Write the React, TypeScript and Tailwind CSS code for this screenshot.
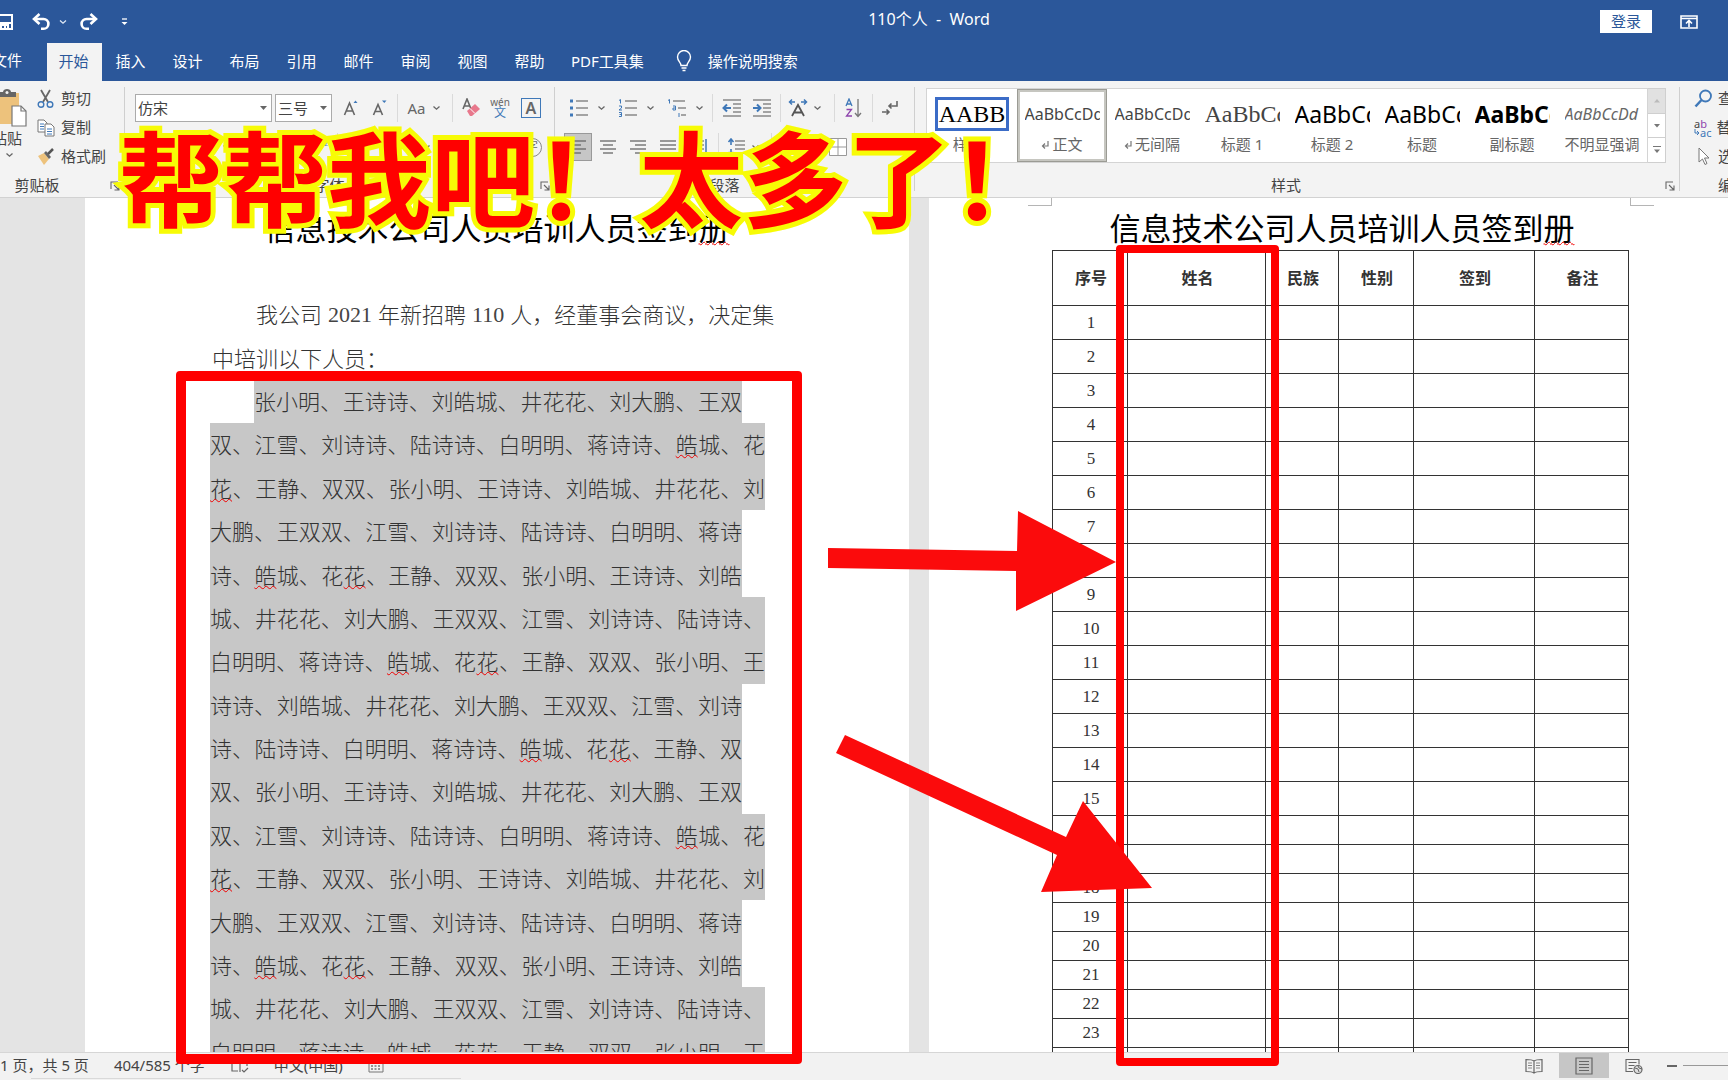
import React from "react";

type Kids = { children?: React.ReactNode };

/* ---------- small drawing helpers ---------- */

function Svg({ w, h, children }: { w: number; h: number } & Kids) {
  return (
    <svg width={w} height={h} viewBox={`0 0 ${w} ${h}`} fill="none" aria-hidden="true" className="shrink-0">
      {children}
    </svg>
  );
}

const Chevron = () => (
  <Svg w={9} h={6}>
    <path d="M1.5 1.5 4.5 4.2 7.5 1.5" stroke="#666" strokeWidth="1.3" />
  </Svg>
);

const Lines = ({ xs, color = "#777" }: { xs: number[][]; color?: string }) => (
  <>
    {xs.map(([x1, x2, y], i) => (
      <path key={i} d={`M${x1} ${y}H${x2}`} stroke={color} strokeWidth="1.3" />
    ))}
  </>
);

const Launcher = () => (
  <button type="button" aria-label="对话框" className="absolute right-1 bottom-[6px]">
    <Svg w={10} h={10}>
      <path d="M1 8V1h7M4 4l4.5 4.5M9 4.5V9H4.5" stroke="#666" strokeWidth="1.1" />
    </Svg>
  </button>
);

function Group({ label, className, launcher, children }: { label: string; className: string; launcher?: boolean } & Kids) {
  return (
    <section aria-label={label} className={`relative flex shrink-0 flex-col ${className}`}>
      <div className="h-[92px]">{children}</div>
      <div className="text-center text-[15px] leading-6 text-[#444]">{label}</div>
      {launcher && <Launcher />}
    </section>
  );
}

const GroupRule = () => <div className="my-[6px] w-px shrink-0 bg-[#cfcfcf]" />;
const Rule = ({ className }: { className: string }) => <div className={`h-7 w-px shrink-0 bg-[#dadada] ${className}`} />;

function Tool({ label, className = "w-7", children }: { label: string; className?: string } & Kids) {
  return (
    <button type="button" aria-label={label} className={`flex h-7 shrink-0 items-center justify-center ${className}`}>
      {children}
    </button>
  );
}

/* ---------- title bar and tabs ---------- */

function TitleBar() {
  return (
    <header className="relative flex h-[43px] items-center justify-center text-[15px] text-white">
      <div className="absolute left-0 flex h-10 items-center">
        <button type="button" aria-label="保存" className="-ml-1">
          <Svg w={18} h={18}>
            <path d="M1 2h15v14H1z" stroke="#fff" strokeWidth="2" />
            <path d="M1 10h15M5 16v-4h7v4M9 13v3" stroke="#fff" strokeWidth="2" />
          </Svg>
        </button>
        <button type="button" aria-label="撤消" className="ml-[18px]">
          <Svg w={20} h={18}>
            <path d="M3 6h8.5a4.7 4.7 0 0 1 0 9.8H9" stroke="#fff" strokeWidth="2.6" />
            <path d="M7.5 1 2 6l5.5 5" stroke="#fff" strokeWidth="2.6" />
          </Svg>
        </button>
        <Svg w={22} h={6}>
          <path d="M8 1.5 11 4.2 14 1.5" stroke="#dfe8f5" strokeWidth="1.3" />
        </Svg>
        <button type="button" aria-label="恢复" className="ml-1">
          <Svg w={20} h={18}>
            <path d="M17 6H8.5a4.7 4.7 0 0 0 0 9.8H11" stroke="#fff" strokeWidth="2.6" />
            <path d="M12.5 1 18 6l-5.5 5" stroke="#fff" strokeWidth="2.6" />
          </Svg>
        </button>
        <button type="button" aria-label="自定义" className="ml-[22px]">
          <Svg w={10} h={10}>
            <path d="M2 2h5" stroke="#fff" strokeWidth="1.3" />
            <path d="M1.5 5h6L4.5 8z" fill="#fff" />
          </Svg>
        </button>
      </div>
      <h1 className="ml-[130px] pb-[6px] text-[16px] whitespace-pre">110个人  -  Word</h1>
      <div className="absolute right-[30px] flex h-[39px] items-center gap-7">
        <button type="button" className="h-[23px] w-[52px] bg-white text-[15px] leading-[23px] text-[#2b579a]">
          登录
        </button>
        <button type="button" aria-label="功能区显示选项">
          <Svg w={18} h={14}>
            <path d="M1 1h16v12H1zM1 3.500h16" stroke="#fff" strokeWidth="1.600" />
            <path d="M9 12V6M6 8.500 9 5.500l3 3" stroke="#fff" strokeWidth="1.600" />
          </Svg>
        </button>
      </div>
    </header>
  );
}

const TABS = ["开始", "插入", "设计", "布局", "引用", "邮件", "审阅", "视图", "帮助"];

function Tabs() {
  return (
    <nav className="flex h-[38px] items-stretch text-[15px] whitespace-nowrap text-white">
      <button type="button" className="-ml-2 mr-[25px] pb-1">文件</button>
      <div className="flex gap-[2px]">
        {TABS.map((t, i) => (
          <button
            type="button"
            key={t}
            className={i === 0 ? "w-[55px] bg-[#f3f3f3] pr-[2px] pb-[2px] text-[#2b579a]" : "w-[55px] pr-[2px] pb-[2px]"}
          >
            {t}
          </button>
        ))}
      </div>
      <button type="button" className="ml-[13px] pb-[2px]">PDF工具集</button>
      <button type="button" className="ml-8 flex items-center gap-4 pb-[2px]">
        <Svg w={16} h={22}>
          <path d="M5 15.500C5 12.500 1.500 11 1.500 7a6.500 6.500 0 0 1 13 0c0 4-3.500 5.500-3.500 8.500zM5.500 18h5M6.500 20.500h3" stroke="#fff" strokeWidth="1.400" />
        </Svg>
        操作说明搜索
      </button>
    </nav>
  );
}

/* ---------- ribbon ---------- */

function Clipboard() {
  return (
    <Group label="剪贴板" className="w-[124px] *:nth-[2]:pr-[50px]" launcher>
      <div className="flex pt-[3px]">
        <button type="button" className="-ml-2 flex w-[38px] flex-col items-center pt-1 text-[15px] leading-5 text-[#444]">
          <Svg w={38} h={40}>
            <path d="M0 5h27v31H0z" fill="#edc27c" />
            <path d="M6 9V4h5c0-4 8-4 8 0h5v5z" fill="#666" />
            <circle cx="15" cy="4.500" r="1.500" fill="#f3f3f3" />
            <path d="M20 18h9l5 5v15H20z" fill="#fff" stroke="#777" strokeWidth="1.200" />
            <path d="M29 18v5h5" stroke="#777" strokeWidth="1.200" />
          </Svg>
          <span className="pr-2 whitespace-nowrap">粘贴</span>
          <span className="mt-1 pr-1"><Chevron /></span>
        </button>
        <div className="ml-[7px] flex flex-col text-[15px] leading-[29px] whitespace-nowrap text-[#444]">
          <button type="button" className="flex items-center gap-[6px]">
            <Svg w={18} h={20}>
              <path d="M4 1l7 12M13 1 6 13" stroke="#666" strokeWidth="1.800" />
              <circle cx="4" cy="15.500" r="2.800" stroke="#3f78b8" strokeWidth="1.400" />
              <circle cx="13" cy="15.500" r="2.800" stroke="#3f78b8" strokeWidth="1.400" />
            </Svg>
            剪切
          </button>
          <button type="button" className="flex items-center gap-[6px]">
            <Svg w={18} h={20}>
              <path d="M1 2h6l3 3v9H1z" fill="#fff" stroke="#777" />
              <path d="M3 6h4M3 8.500h4M3 11h4" stroke="#3f78b8" />
              <path d="M8 6h6l3 3v9H8z" fill="#fff" stroke="#777" />
              <path d="M10 11h5M10 13.500h5M10 16h5" stroke="#3f78b8" />
            </Svg>
            复制
          </button>
          <button type="button" className="flex items-center gap-[6px]">
            <Svg w={18} h={20}>
              <path d="M1 9l6-3 5 6-5 6z" fill="#edc27c" />
              <path d="M7 6l2-2 5 6-2 2z" fill="#666" />
              <path d="M11 7l5-5" stroke="#555" strokeWidth="2.500" />
            </Svg>
            格式刷
          </button>
        </div>
      </div>
    </Group>
  );
}

function Combo({ label, value, className }: { label: string; value: string; className: string }) {
  return (
    <div className={`relative h-7 shrink-0 ${className}`}>
      <select aria-label={label} defaultValue={value} className="h-7 w-full appearance-none border border-[#ababab] bg-white pl-[2px] text-[15px] text-[#444]">
        <option>{value}</option>
      </select>
      <span className="pointer-events-none absolute top-3 right-[5px]">
        <Svg w={7} h={4}>
          <path d="M0 0h7L3.500 4z" fill="#666" />
        </Svg>
      </span>
    </div>
  );
}

function FontGroup() {
  return (
    <Group label="字体" className="w-[429px] *:nth-[2]:pr-5" launcher>
      <div className="flex items-center pt-[13px] pl-[10px] font-['Noto_Sans'] text-[#666]">
        <Combo label="字体" value="仿宋" className="w-[137px] font-['Noto_Sans_CJK_SC']" />
        <Combo label="字号" value="三号" className="ml-[3px] w-[57px] font-['Noto_Sans_CJK_SC']" />
        <Tool label="增大字号" className="ml-[5px] w-7">
          <Svg w={16} h={18}>
            <path d="M1.500 16 6.500 4l5 12M3.200 12h6.600" stroke="#666" strokeWidth="1.600" />
            <path d="M10.500 4l2-2.500 2 2.500z" fill="#3f78b8" />
          </Svg>
        </Tool>
        <Tool label="减小字号" className="ml-px w-7">
          <Svg w={16} h={18}>
            <path d="M1.500 16 6 5.500l4.500 10.500M3.200 12.500h5.600" stroke="#666" strokeWidth="1.600" />
            <path d="M10 1.500h4.500L12.300 4z" fill="#3f78b8" />
          </Svg>
        </Tool>
        <Rule className="ml-[3px]" />
        <Tool label="更改大小写" className="ml-1 w-11 gap-[6px] text-[15px]">
          Aa <Chevron />
        </Tool>
        <Rule className="ml-[6px]" />
        <Tool label="清除格式" className="ml-[5px] w-7">
          <Svg w={20} h={20}>
            <path d="M1 11 5 1l4 10M2.500 8h5" stroke="#666" strokeWidth="1.600" />
            <path d="M5 13 13 6l5 5-8 7H8z" fill="#e8788c" />
            <path d="M8 10.500 13 15.500" stroke="#fff" />
          </Svg>
        </Tool>
        <Tool label="拼音指南" className="w-7 flex-col text-[10px] leading-[8px]">
          <span>wén</span>
          <span className="font-['Noto_Sans_CJK_SC'] text-[12px] leading-3 text-[#3f78b8]">文</span>
        </Tool>
        <Tool label="字符边框" className="ml-[3px] w-7">
          <span className="h-5 w-5 border border-[#3f78b8] text-[16px] leading-[18px] font-semibold">A</span>
        </Tool>
      </div>
      <div className="flex items-center pt-[11px] pl-[87px]">
        <Tool label="下划线"><Chevron /></Tool>
        <Tool label="上标" className="ml-[66px] w-7 font-['Noto_Sans'] text-[10px] text-[#3f78b8]">
          <sup className="pl-3">2</sup>
        </Tool>
        <Rule className="ml-[3px]" />
        <Tool label="突出显示" className="ml-[74px] w-7"><Chevron /></Tool>
        <Tool label="字体颜色" className="w-7 font-['Noto_Sans'] text-[16px] font-semibold text-[#666]">
          <span className="pb-2">A</span>
        </Tool>
        <Tool label="带圈字符" className="ml-[50px] w-7">
          <span className="h-[19px] w-[19px] rounded-full border border-[#888] text-[12px] leading-4 text-[#666]">字</span>
        </Tool>
      </div>
    </Group>
  );
}

const ALIGN: Record<string, number[][]> = {
  左对齐: [[1, 17, 2], [1, 12, 6], [1, 17, 10], [1, 12, 14]],
  居中: [[1, 17, 2], [4, 14, 6], [1, 17, 10], [4, 14, 14]],
  右对齐: [[1, 17, 2], [6, 17, 6], [1, 17, 10], [6, 17, 14]],
  两端对齐: [[1, 17, 2], [1, 17, 6], [1, 17, 10], [1, 17, 14]],
};

function Paragraph() {
  return (
    <Group label="段落" className="w-[359px] *:nth-[2]:pr-5">
      <div className="flex items-center pt-[13px] pl-[10px]">
        <Tool label="项目符号" className="w-[45px] gap-2">
          <Svg w={20} h={18}>
            <path d="M1 2h3M1 9h3M1 16h3" stroke="#3f78b8" strokeWidth="3" />
            <Lines xs={[[7, 19, 2], [7, 19, 9], [7, 19, 16]]} />
          </Svg>
          <Chevron />
        </Tool>
        <Tool label="编号" className="ml-1 w-[45px] gap-2">
          <Svg w={20} h={18}>
            <path d="M1 1.500 2.500.500v4M1 7h2.500v2L1 11h3M1 13.500h2.500v4H1M1.500 15.500h2" stroke="#3f78b8" />
            <Lines xs={[[7, 19, 2], [7, 19, 9], [7, 19, 16]]} />
          </Svg>
          <Chevron />
        </Tool>
        <Tool label="多级列表" className="ml-1 w-[45px] gap-2">
          <Svg w={20} h={18}>
            <path d="M1 1.500 2.500.500v4M6 7h2.500v4H6V9h2.500M12 14v4" stroke="#3f78b8" />
            <Lines xs={[[6, 18, 2], [11, 19, 9], [14, 19, 16]]} />
          </Svg>
          <Chevron />
        </Tool>
        <Rule className="ml-1" />
        <Tool label="减少缩进量" className="ml-1 w-[30px]">
          <Svg w={20} h={18}>
            <Lines xs={[[1, 19, 1], [11, 19, 5], [11, 19, 9], [11, 19, 13], [1, 19, 17]]} />
            <path d="M9 9H2M5 5.500 1.500 9 5 12.500" stroke="#3f78b8" strokeWidth="2" />
          </Svg>
        </Tool>
        <Tool label="增加缩进量" className="w-[30px]">
          <Svg w={20} h={18}>
            <Lines xs={[[1, 19, 1], [11, 19, 5], [11, 19, 9], [11, 19, 13], [1, 19, 17]]} />
            <path d="M1 9h7M5 5.500 8.500 9 5 12.500" stroke="#3f78b8" strokeWidth="2" />
          </Svg>
        </Tool>
        <Rule className="ml-[3px]" />
        <Tool label="中文版式" className="ml-[3px] w-[42px] gap-[5px]">
          <Svg w={20} h={18}>
            <path d="M1 3h6M4 .500 1.500 3 4 5.500M19 3h-6M16 .500 18.500 3 16 5.500" stroke="#3f78b8" strokeWidth="1.500" />
            <path d="M4 17 10 6l6 11M6.500 13.500h7" stroke="#555" strokeWidth="1.800" />
          </Svg>
          <Chevron />
        </Tool>
        <Rule className="ml-2" />
        <Tool label="排序" className="ml-1 w-[30px]">
          <Svg w={18} h={20}>
            <path d="M1 8 4 1l3 7M2 6h4" stroke="#3f78b8" strokeWidth="1.300" />
            <path d="M1.500 11.500h5L1.500 18h5.500" stroke="#8e44ad" strokeWidth="1.300" />
            <path d="M13 1v17M10 15l3 3.500 3-3.500" stroke="#777" strokeWidth="1.300" />
          </Svg>
        </Tool>
        <Rule className="ml-[3px]" />
        <Tool label="显示编辑标记" className="ml-[3px] w-7">
          <Svg w={18} h={18}>
            <path d="M16 2v5H8M10.500 4.500 8 7l2.500 2.500M1 13h7M5.500 10.500 8 13l-2.500 2.500" stroke="#666" strokeWidth="1.600" />
          </Svg>
        </Tool>
      </div>
      <div className="flex items-center gap-[2px] pt-[11px] pl-[9px]">
        {Object.entries(ALIGN).map(([name, xs], i) => (
          <Tool key={name} label={name} className={i === 0 ? "w-7 border border-[#999] bg-[#c6c6c6]" : "w-7"}>
            <Svg w={18} h={16}>
              <Lines xs={xs} color="#666" />
            </Svg>
          </Tool>
        ))}
        <Tool label="分散对齐">
          <Svg w={18} h={18}>
            <path d="M1 1v16M17 1v16" stroke="#3f78b8" strokeWidth="1.500" />
            <Lines xs={[[3, 15, 3], [3, 15, 7], [3, 15, 11], [3, 15, 15]]} />
          </Svg>
        </Tool>
        <Rule className="ml-1" />
        <Tool label="行和段落间距" className="w-[44px] gap-[6px]">
          <Svg w={18} h={18}>
            <path d="M4 1v6M1.500 4 4 1l2.500 3M4 17v-6M1.500 14 4 17l2.500-3" stroke="#3f78b8" strokeWidth="1.600" />
            <Lines xs={[[8, 18, 3], [8, 18, 7], [8, 18, 11], [8, 18, 15]]} />
          </Svg>
          <Chevron />
        </Tool>
        <Rule className="ml-1" />
        <Tool label="边框" className="ml-[50px] w-7">
          <Svg w={18} h={18}>
            <path d="M.500.500h17v17H.500zM9 1v16M1 9h16" stroke="#999" fill="#fff" />
          </Svg>
        </Tool>
      </div>
    </Group>
  );
}

const STYLES = [
  { label: "样式1", text: "AABB", cls: "font-['Liberation_Serif'] text-[24px] text-black" },
  { label: "正文", mark: true, text: "AaBbCcDd", cls: "font-['Noto_Sans'] text-[16px] text-[#444]" },
  { label: "无间隔", mark: true, text: "AaBbCcDd", cls: "font-['Noto_Sans'] text-[16px] text-[#444]" },
  { label: "标题 1", text: "AaBbCc", cls: "font-['Liberation_Serif'] text-[24px] text-[#444]" },
  { label: "标题 2", text: "AaBbCc", cls: "font-['Noto_Sans'] text-[23px] text-black" },
  { label: "标题", text: "AaBbCc", cls: "font-['Noto_Sans'] text-[23px] text-black" },
  { label: "副标题", text: "AaBbCc", cls: "font-['Noto_Sans'] text-[23px] font-bold text-black" },
  { label: "不明显强调", text: "AaBbCcDd", cls: "font-['Noto_Sans'] text-[16px] text-[#666] italic" },
];

function Styles() {
  return (
    <Group label="样式" className="w-[764px] *:nth-[2]:pr-[22px]" launcher>
      <div className="flex pt-[7px] pl-[11px]">
        <div className="flex h-[75px] border border-[#d4d4d4] bg-white">
          {STYLES.map((s, i) => (
            <button
              type="button"
              key={s.label}
              className={
                i === 1
                  ? "flex w-[90px] flex-col items-center border-[3px] border-[#c6c6c0] pt-[5px] outline -outline-offset-1 outline-[#9b9b94]"
                  : "flex w-[90px] flex-col items-center pt-2"
              }
            >
              <span
                className={
                  i === 0
                    ? "h-[34px] w-[74px] overflow-hidden border-[3px] border-[#3b6cc7] text-center leading-7"
                    : "h-[34px] w-[75px] overflow-hidden text-left leading-[34px]"
                }
              >
                <span className={`whitespace-nowrap ${s.cls}`}>{s.text}</span>
              </span>
              <span className="flex items-center gap-[3px] text-[15px] leading-[26px] whitespace-nowrap text-[#666]">
                {s.mark && (
                  <Svg w={8} h={9}>
                    <path d="M7 1v5H2M4 3.500 1.500 6 4 8.500" stroke="#777" strokeWidth="1.200" />
                  </Svg>
                )}
                {s.label}
              </span>
            </button>
          ))}
        </div>
        <div className="flex w-[18px] flex-col border-y border-r border-[#cfcfcf] bg-white">
          <button type="button" aria-label="上一行" className="flex flex-1 items-center justify-center bg-[#e1e1e1]">
            <Svg w={6} h={4}><path d="M0 3.500h6L3 0z" fill="#bbb" /></Svg>
          </button>
          <button type="button" aria-label="下一行" className="flex flex-1 items-center justify-center border-y border-[#cfcfcf]">
            <Svg w={6} h={4}><path d="M0 0h6L3 3.500z" fill="#777" /></Svg>
          </button>
          <button type="button" aria-label="其他" className="flex flex-1 items-center justify-center">
            <Svg w={8} h={8}><path d="M0 .500h8" stroke="#777" /><path d="M1 3.500h6L4 7z" fill="#777" /></Svg>
          </button>
        </div>
      </div>
    </Group>
  );
}

function Editing() {
  return (
    <section aria-label="编辑" className="flex min-w-0 flex-1 flex-col overflow-hidden pt-[3px] pl-[14px] text-[15px] leading-[29px] whitespace-nowrap text-[#444]">
      <button type="button" className="flex items-center gap-[5px]">
        <Svg w={19} h={19}>
          <circle cx="11.500" cy="7" r="5.500" stroke="#3f78b8" strokeWidth="1.800" />
          <path d="M7.500 11 1.500 17.500" stroke="#3f78b8" strokeWidth="2.500" />
        </Svg>
        查找
      </button>
      <button type="button" className="flex items-center gap-[5px]">
        <span className="w-[19px] text-left font-['Noto_Sans'] text-[11px] leading-[9px]">
          a<span className="text-[#8e44ad]">b</span>
          <span className="flex items-center text-[#3f78b8]">
            <Svg w={6} h={7}>
              <path d="M1 0v4h4M3 2l2 2-2 2" stroke="#3f78b8" />
            </Svg>
            ac
          </span>
        </span>
        替换
      </button>
      <button type="button" className="flex items-center gap-[5px]">
        <Svg w={19} h={19}>
          <path d="M5 1v14l3.500-3 2.500 5.500 2-1-2.500-5.500H15z" stroke="#777" fill="#fff" />
        </Svg>
        选择
      </button>
      <span className="pl-6">编辑</span>
    </section>
  );
}

/* ---------- documents ---------- */

const TITLE = "信息技术公司人员培训人员签到";
/* "|" parts a line into words, "*" marks a word with a spelling mark */
const CYCLE = [
  "双、|江雪、|刘诗诗、|陆诗诗、|白明明、|蒋诗诗、|*皓|城、|花",
  "*花|、|王静、|双双、|张小明、|王诗诗、|刘皓城、|井花花、|刘",
  "大鹏、|王双双、|江雪、|刘诗诗、|陆诗诗、|白明明、|蒋诗",
  "诗、|*皓|城、|花|*花|、|王静、|双双、|张小明、|王诗诗、|刘皓",
  "城、|井花花、|刘大鹏、|王双双、|江雪、|刘诗诗、|陆诗诗、",
  "白明明、|蒋诗诗、|*皓|城、|花|*花|、|王静、|双双、|张小明、|王",
];
const NAMES = [
  "张小明、|王诗诗、|刘皓城、|井花花、|刘大鹏、|王双",
  ...CYCLE,
  "诗诗、|刘皓城、|井花花、|刘大鹏、|王双双、|江雪、|刘诗",
  "诗、|陆诗诗、|白明明、|蒋诗诗、|*皓|城、|花|*花|、|王静、|双",
  "双、|张小明、|王诗诗、|刘皓城、|井花花、|刘大鹏、|王双",
  ...CYCLE,
];

const WAVY = "underline decoration-[#f00000] decoration-wavy decoration-1 underline-offset-1";

function NameLine({ line, first }: { line: string; first: boolean }) {
  const count = line.replace(/[|*]/g, "").length;
  const width = first ? "ml-11 w-[488px]" : count > 24 ? "w-[555px]" : "w-[532px]";
  return (
    <div className={`flex items-center justify-between bg-[#c7c7c7] whitespace-nowrap ${width}`}>
      {line.split("|").map((part, i) =>
        part.startsWith("*") ? (
          <span key={i} className={WAVY}>{part.slice(1)}</span>
        ) : (
          <span key={i}>{part}</span>
        ),
      )}
    </div>
  );
}

function Heading() {
  return (
    <h2 className="flex justify-center text-[31px] leading-[44px] whitespace-nowrap text-black">
      {TITLE}
      <span className={WAVY}>册</span>
    </h2>
  );
}

function Corner({ className }: { className: string }) {
  return <div className={`absolute top-0 h-2 w-6 border-b border-[#b5b5b5] ${className}`} />;
}

function LeftPage() {
  return (
    <article className="relative w-[824px] shrink-0 overflow-hidden bg-white px-[125px] pt-2">
      <Corner className="left-[101px] border-r" />
      <Corner className="right-[98px] border-l" />
      <Heading />
      <div className="mt-[43px] grid h-[781px] auto-rows-fr text-[22px] font-light text-[#333]">
        <p className="flex items-center gap-[6px] pl-[46px] whitespace-nowrap">
          <span>我公司</span>
          <span className="font-['Liberation_Serif'] text-[#444]">2021</span>
          <span>年新招聘</span>
          <span className="font-['Liberation_Serif'] text-[#444]">110</span>
          <span>人，经董事会商议，决定集</span>
        </p>
        <p className="flex items-center pl-[2px]">中培训以下人员：</p>
        {NAMES.map((line, i) => (
          <NameLine key={i} line={line} first={i === 0} />
        ))}
      </div>
    </article>
  );
}

const COLUMNS = ["序号", "姓名", "民族", "性别", "签到", "备注"];

function RightPage() {
  return (
    <article className="relative min-w-0 flex-1 overflow-hidden bg-white pt-2 pl-[123px]">
      <Corner className="left-[99px] border-r" />
      <Corner className="left-[701px] border-l" />
      <div className="w-[577px]">
        <div className="w-[580px]">
          <Heading />
        </div>
        <table className="w-full table-fixed border-collapse text-center text-[#333]">
          <colgroup>
            <col className="w-[75px]" />
            <col className="w-[138px]" />
            <col className="w-[73px]" />
            <col className="w-[75px]" />
            <col className="w-[121px]" />
            <col className="w-[94px]" />
          </colgroup>
          <thead>
            <tr className="h-[55px] text-[16px]">
              {COLUMNS.map((c) => (
                <th key={c} scope="col" className="border border-[#333] pl-[2px] font-bold">{c}</th>
              ))}
            </tr>
          </thead>
          <tbody className="font-['Liberation_Serif'] text-[17px] leading-5">
            {Array.from({ length: 24 }, (_, i) => (
              <tr key={i} className={i < 15 ? "h-[34px]" : "h-[29px]"}>
                {COLUMNS.map((c, j) => (
                  <td key={c} className="border border-[#333] pl-[2px]">{j === 0 ? i + 1 : ""}</td>
                ))}
              </tr>
            ))}
          </tbody>
        </table>
      </div>
    </article>
  );
}

/* ---------- status bar ---------- */

function StatusBar() {
  return (
    <footer className="flex h-7 shrink-0 flex-col border-t border-[#d6d6d6] bg-[#f2f2f2] text-[15px] whitespace-nowrap text-[#444]">
      <div className="flex h-[25px] items-center">
        <span>1 页，共 5 页</span>
        <span className="ml-[25px]">404/585 个字</span>
        <span className="ml-[26px]">
          <Svg w={18} h={16}>
            <path d="M9 14V3C7 2 4 2 1 2v11h6M9 3c2-1 4-1 7-1v6M11 12l2 2 4-4" stroke="#666" strokeWidth="1.200" />
          </Svg>
        </span>
        <span className="ml-[25px]">中文(中国)</span>
        <span className="ml-[25px]">
          <Svg w={16} h={14}>
            <path d="M1 1h14v12H1zM1 4h14" stroke="#777" />
            <path d="M3 7h10M3 10h10" stroke="#777" strokeDasharray="2 1.500" strokeWidth="1.500" />
          </Svg>
        </span>
        <div className="ml-auto flex h-full items-center">
          <button type="button" aria-label="阅读视图">
            <Svg w={18} h={16}>
              <path d="M9 3C7 1.500 4 1.500 1 1.500v12c3 0 6 0 8 1.500 2-1.500 5-1.500 8-1.500v-12c-3 0-6 0-8 1.500zM9 3v12" stroke="#666" strokeWidth="1.200" />
              <path d="M3 5h4M3 7.500h4M3 10h4M11 5h4M11 7.500h4M11 10h4" stroke="#888" />
            </Svg>
          </button>
          <button type="button" aria-label="页面视图" className="mx-4 flex h-[25px] w-[50px] items-center justify-center bg-[#c6c6c6]">
            <Svg w={18} h={18}>
              <path d="M1 1h16v16H1z" stroke="#666" strokeWidth="1.200" />
              <path d="M4 4.500h10M4 7.500h10M4 10.500h10M4 13.500h10" stroke="#666" />
            </Svg>
          </button>
          <button type="button" aria-label="Web 版式视图">
            <Svg w={18} h={16}>
              <path d="M8 13.500H1v-12h13v5M3.500 4.500h8M3.500 7.500h6M3.500 10.500h4" stroke="#666" strokeWidth="1.100" />
              <circle cx="13" cy="11.500" r="4" stroke="#666" strokeWidth="1.200" fill="#ddd" />
              <path d="M10 10l3 1 1 3M13 8l1 2 3 1" stroke="#666" />
            </Svg>
          </button>
          <button type="button" aria-label="缩小" className="ml-6 h-[2px] w-[10px] bg-[#666]" />
          <span className="ml-[6px] h-px w-[45px] bg-[#999]" />
        </div>
      </div>
      <div className="ml-[31px] h-px w-[430px] bg-[#d9d9d9]" />
    </footer>
  );
}

/* ---------- red mark-up drawn over the window ---------- */

function Markup() {
  return (
    <div className="pointer-events-none absolute inset-0">
      <div className="absolute top-[371px] left-[176px] h-[693px] w-[626px] rounded-[4px] border-[10px] border-[#ff0000]" />
      <div className="absolute top-[245px] left-[1116px] h-[821px] w-[163px] rounded-[4px] border-8 border-[#ff0000]" />
      <svg className="absolute top-[500px] left-[820px]" width="340" height="400" viewBox="820 500 340 400" aria-hidden="true">
        <path d="M828 548 1017 551 1018 511 1116 562 1016 611 1016 571 828 568z" fill="#fb0b0c" />
        <path d="M845 735 1066 837 1083 801 1152 888 1041 892 1057 855 836 753z" fill="#fb0b0c" />
      </svg>
      <p className="absolute top-[124px] left-[119px] text-[104px] leading-[112px] font-bold whitespace-nowrap text-[#ff0000] [-webkit-text-stroke:10px_#f7fb05] [paint-order:stroke_fill] [stroke-linejoin:round]">
        帮帮我吧！太多了！
      </p>
    </div>
  );
}

export default function App() {
  return (
    <div className="relative flex h-screen flex-col overflow-hidden bg-[#e4e4e4] font-['Noto_Sans','Noto_Sans_CJK_SC',sans-serif]">
      <div className="shrink-0 bg-[#2b579a]">
        <TitleBar />
        <Tabs />
      </div>
      <div className="flex h-[117px] shrink-0 border-b border-[#d2d2d2] bg-[#f3f3f3]">
        <Clipboard />
        <GroupRule />
        <FontGroup />
        <GroupRule />
        <Paragraph />
        <GroupRule />
        <Styles />
        <GroupRule />
        <Editing />
      </div>
      <main className="flex min-h-0 flex-1 gap-5 pl-[85px]">
        <LeftPage />
        <RightPage />
      </main>
      <StatusBar />
      <Markup />
    </div>
  );
}
